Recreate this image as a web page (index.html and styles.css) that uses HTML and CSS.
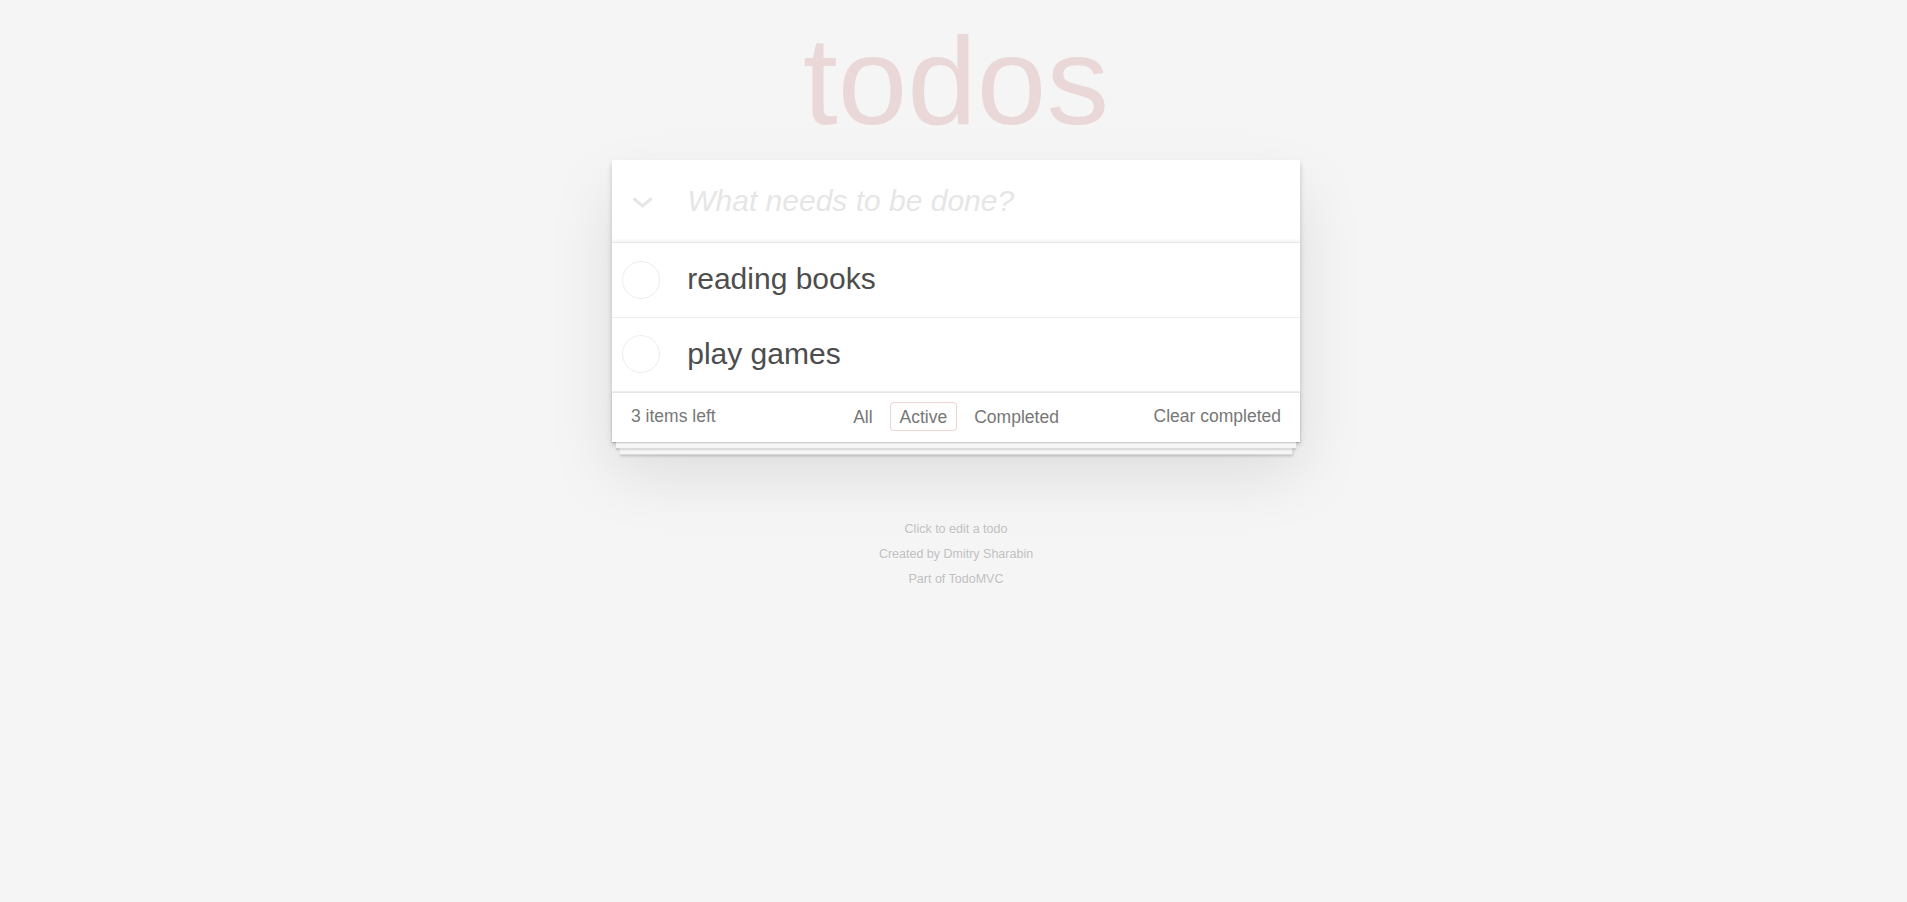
FILE: index.html
```html
<!DOCTYPE html>
<html lang="en">
<head>
<meta charset="utf-8">
<title>Todos</title>
<link rel="stylesheet" href="styles.css">
</head>
<body>
<div class="page">
  <h1 class="title">todos</h1>
  <section class="todoapp">
    <header class="header">
      <span class="toggle-all">
        <svg width="21" height="11" viewBox="0 0 21 11"><polyline points="1.5,1.5 10.5,9 19.5,1.5" fill="none" stroke="#e6e6e6" stroke-width="3"/></svg>
      </span>
      <input class="new-todo" placeholder="What needs to be done?">
    </header>
    <ul class="todo-list">
      <li class="todo">
        <span class="toggle"></span>
        <label class="todo-label">reading books</label>
      </li>
      <li class="todo">
        <span class="toggle"></span>
        <label class="todo-label">play games</label>
      </li>
    </ul>
    <footer class="footer">
      <span class="todo-count">3 items left</span>
      <ul class="filters">
        <li><a href="#/">All</a></li>
        <li><a href="#/active" class="selected">Active</a></li>
        <li><a href="#/completed">Completed</a></li>
      </ul>
      <span class="clear-completed">Clear completed</span>
    </footer>
  </section>
  <footer class="info">
    <p>Click to edit a todo</p>
    <p>Created by <a href="#">Dmitry Sharabin</a></p>
    <p>Part of <a href="#">TodoMVC</a></p>
  </footer>
</div>
</body>
</html>
```
FILE: styles.css
```css
html, body {
  margin: 0;
  padding: 0;
}
body {
  background: #f5f5f5;
  color: #4d4d4d;
  font-family: "Liberation Sans", Arial, sans-serif;
  font-size: 17.5px;
  line-height: 24.5px;
  padding-left: 5px;
}
.page {
  width: 687.5px;
  margin: 0 auto;
}
.title {
  margin: 0;
  padding-top: 2px;
  height: 158px;
  line-height: 158px;
  font-size: 125px;
  font-weight: normal;
  text-align: center;
  color: rgba(175, 47, 47, 0.15);
}
.todoapp {
  background: #fff;
  box-shadow: 0 2.5px 5px 0 rgba(0, 0, 0, 0.2), 0 31px 62px 0 rgba(0, 0, 0, 0.1);
}
.header {
  display: flex;
  align-items: center;
  height: 82px;
  box-shadow: inset 0 -2.5px 1px rgba(0, 0, 0, 0.03);
}
.toggle-all {
  width: 75px;
  box-sizing: border-box;
  padding-left: 20px;
  padding-top: 3px;
  display: flex;
}
.new-todo {
  flex: 1;
  border: none;
  outline: none;
  background: transparent;
  padding: 0 20px 0 0;
  margin: 0;
  font-family: inherit;
  font-size: 30px;
  line-height: 42px;
  color: #4d4d4d;
}
.new-todo::placeholder {
  font-style: italic;
  color: #e6e6e6;
}
.todo-list {
  margin: 0;
  padding: 0;
  list-style: none;
  border-top: 1.25px solid #e6e6e6;
}
.todo {
  display: flex;
  align-items: center;
  border-bottom: 1.25px solid #ededed;
}
.toggle {
  width: 38px;
  height: 38px;
  box-sizing: border-box;
  margin-left: 10px;
  border: 1.5px solid #ededed;
  border-radius: 50%;
  flex: none;
}
.todo-label {
  display: block;
  padding: 18.25px 18.75px 19.25px 27px;
  font-size: 30px;
  line-height: 36px;
  color: #4d4d4d;
}
.footer {
  position: relative;
  display: grid;
  grid-template-columns: 1fr auto 1fr;
  align-items: center;
  height: 50px;
  box-sizing: border-box;
  padding: 0 18.75px 2px;
  border-top: 1.25px solid #e6e6e6;
  color: #777;
  font-size: 17.5px;
}
.footer::before {
  content: "";
  position: absolute;
  left: 0;
  right: 0;
  bottom: 0;
  height: 50px;
  box-shadow: 0 1.25px 1.25px rgba(0, 0, 0, 0.2),
    0 10px 0 -3.75px #f6f6f6,
    0 11.25px 1.25px -3.75px rgba(0, 0, 0, 0.2),
    0 20px 0 -7.5px #f6f6f6,
    0 21.25px 2.5px -7.5px rgba(0, 0, 0, 0.2);
  pointer-events: none;
}
.todo-count {
  justify-self: start;
}
.filters {
  display: flex;
  margin: 0;
  padding: 0;
  list-style: none;
}
.filters a {
  display: inline-block;
  margin: 0 3.75px;
  padding: 3.75px 8.75px;
  line-height: 20px;
  border: 1.25px solid transparent;
  border-radius: 3.75px;
  color: inherit;
  text-decoration: none;
}
.filters a.selected {
  border-color: rgba(175, 47, 47, 0.2);
}
.clear-completed {
  justify-self: end;
}
.info {
  margin-top: 81px;
  text-align: center;
  color: #bfbfbf;
  font-size: 12.5px;
  text-shadow: 0 1px 0 rgba(255, 255, 255, 0.5);
}
.info p {
  margin: 0 0 12.5px;
  line-height: 1;
}
.info a {
  color: inherit;
  text-decoration: none;
}
```
